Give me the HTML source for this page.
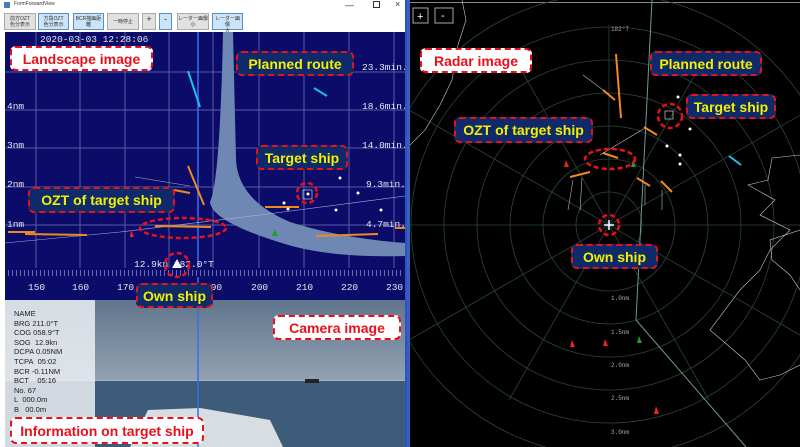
<!DOCTYPE html>
<html><head><meta charset="utf-8"><style>
*{margin:0;padding:0}
body{width:800px;height:447px;overflow:hidden;background:#000;position:relative;font-family:"Liberation Sans","Noto Sans CJK JP",sans-serif}
.lb{position:absolute;border:2.5px dashed #e8101a;border-radius:6px;font-weight:bold;font-size:14px;display:flex;align-items:center;justify-content:center;box-sizing:border-box;white-space:nowrap}
.y{background:#0e2a6a;color:#f4f000}
.w{background:#fff;color:#e8101a}
.btn{position:absolute;top:13px;height:17px;border:1px solid #aaa;background:#e1e1e1;font-size:5px;line-height:6px;text-align:center;color:#333;box-sizing:border-box;padding-top:2px}
.btn.b{background:#cce4f7;border-color:#5a8fcf}
.info{position:absolute;left:5px;top:300px;width:90px;height:147px;background:rgba(235,238,242,.85);font-size:7.5px;line-height:9.6px;color:#222;padding:9px 0 0 9px;box-sizing:border-box}
</style></head><body>
<div style="position:absolute;left:0;top:0;width:407px;height:447px;background:#fff"></div>
<div style="position:absolute;left:4px;top:2px;width:6px;height:6px;background:#4a7cc4"></div>
<div style="position:absolute;left:14px;top:1px;font-size:5px;color:#333">FormForwardView</div>
<div style="position:absolute;left:345px;top:0;font-size:9px;color:#333">—</div>
<div style="position:absolute;left:373px;top:1px;width:5px;height:5px;border:1px solid #333"></div>
<div style="position:absolute;left:395px;top:-1px;font-size:9px;color:#333">×</div>
<div class="btn" style="left:4px;width:32px">前方OZT<br>色分表示</div>
<div class="btn b" style="left:38px;width:31px">方角OZT<br>色分表示</div>
<div class="btn b" style="left:73px;width:31px">BCR描画距<br>離</div>
<div class="btn" style="left:107px;width:32px;padding-top:5px">一時停止</div>
<div class="btn" style="left:142px;width:14px;font-size:9px;padding-top:2px">+</div>
<div class="btn b" style="left:159px;width:13px;font-size:9px;padding-top:2px">-</div>
<div class="btn" style="left:177px;width:32px">レーダー画像<br>小</div>
<div class="btn b" style="left:212px;width:31px">レーダー画像<br>大</div>

<svg style="position:absolute;left:0;top:0" width="800" height="447">
<defs>
<linearGradient id="sky" x1="0" y1="0" x2="0" y2="1"><stop offset="0" stop-color="#5a6f86"/><stop offset=".55" stop-color="#a8b4c2"/><stop offset=".6" stop-color="#8c9bb0"/><stop offset="1" stop-color="#3f5a78"/></linearGradient>
<clipPath id="rc"><rect x="410" y="0" width="390" height="447"/></clipPath>
<clipPath id="cc"><rect x="5" y="32" width="400" height="268"/></clipPath>
</defs>
<rect x="5" y="32" width="400" height="268" fill="#0b0b6a"/>
<g stroke="#5b5ba3" stroke-width="1">
<line x1="36" y1="32" x2="36" y2="268"/><line x1="80" y1="32" x2="80" y2="268"/><line x1="125" y1="32" x2="125" y2="268"/><line x1="169" y1="32" x2="169" y2="268"/><line x1="213" y1="32" x2="213" y2="268"/><line x1="259" y1="32" x2="259" y2="268"/><line x1="304" y1="32" x2="304" y2="268"/><line x1="349" y1="32" x2="349" y2="268"/><line x1="394" y1="32" x2="394" y2="268"/>
<line x1="5" y1="72" x2="405" y2="72"/><line x1="5" y1="110" x2="405" y2="110"/><line x1="5" y1="148" x2="405" y2="148"/><line x1="5" y1="187" x2="405" y2="187"/><line x1="5" y1="225" x2="405" y2="225"/>
</g>
<g clip-path="url(#cc)">
<path d="M223 32 L233 32 L236 160 Q238 200 290 222 Q340 238 405 243 L405 256 Q330 258 285 244 Q212 222 210 202 Q220 180 223 32Z" fill="#6f88b3"/>
</g>
<line x1="198" y1="32" x2="198" y2="447" stroke="#3a6ef0" stroke-width="1.5"/>
<g stroke="#b0b0d0" stroke-width=".6" fill="none">
<path d="M5 243 L120 232 L260 215 L405 196"/><path d="M135 177 L190 186"/>
</g>
<g stroke="#f08a1e" stroke-width="2">
<line x1="8" y1="232" x2="35" y2="232"/><line x1="25" y1="234" x2="87" y2="235"/><line x1="155" y1="226" x2="211" y2="227"/><line x1="265" y1="207" x2="299" y2="207"/><line x1="316" y1="236" x2="378" y2="234"/><line x1="395" y1="228" x2="405" y2="228"/><line x1="188" y1="166" x2="204" y2="205"/><line x1="174" y1="190" x2="190" y2="193"/>
</g>
<g stroke="#19c0f0" stroke-width="2"><line x1="188" y1="71" x2="200" y2="107"/><line x1="314" y1="88" x2="327" y2="96"/></g>
<g fill="#fff"><circle cx="340" cy="178" r="1.5"/><circle cx="284" cy="203" r="1.5"/><circle cx="358" cy="193" r="1.5"/><circle cx="336" cy="210" r="1.5"/><circle cx="381" cy="210" r="1.5"/><circle cx="288" cy="209" r="1.5"/><circle cx="308" cy="194" r="1.5"/></g>
<rect x="303" y="190" width="9" height="9" fill="none" stroke="#ccc" stroke-width=".7"/>
<path d="M275 229 L278 236 L272 236Z" fill="#1aa03a"/>
<path d="M131 230 L134 237 L130 237Z" fill="#e22"/>
<path d="M171 270 L177 259 L183 270Z" fill="#fff"/>
<rect x="5" y="268" width="400" height="9" fill="#0b0b6a"/>
<line x1="8" y1="273" x2="402" y2="273" stroke="#6a6ab0" stroke-width="6" stroke-dasharray="1 3"/>
<g fill="#e8e8f0" font-family="Liberation Mono,monospace" font-size="9.5">
<text x="40" y="42">2020-03-03 12:28:06</text>
<text x="7" y="109">4nm</text><text x="7" y="148">3nm</text><text x="7" y="187">2nm</text><text x="7" y="227">1nm</text>
<text x="362" y="70">23.3min.</text><text x="362" y="109">18.6min.</text><text x="362" y="148">14.0min.</text><text x="366" y="187">9.3min.</text><text x="366" y="227">4.7min.</text>
<text x="134" y="267">12.9kn   182.0°T</text>
<text x="28" y="290">150</text><text x="72" y="290">160</text><text x="117" y="290">170</text><text x="161" y="290">180</text><text x="205" y="290">190</text><text x="251" y="290">200</text><text x="296" y="290">210</text><text x="341" y="290">220</text><text x="386" y="290">230</text>
</g>
<rect x="5" y="300" width="400" height="147" fill="url(#sky)"/>
<rect x="5" y="300" width="400" height="80" fill="#6d8099" opacity=".35"/>
<rect x="5" y="381" width="400" height="66" fill="#3f5b7a"/>
<path d="M130 447 L148 410 L200 408 L270 420 L283 447Z" fill="#d8dde2"/>
<rect x="305" y="379" width="14" height="4" fill="#222"/>
<line x1="198" y1="300" x2="198" y2="447" stroke="#3a6ef0" stroke-width="1.5"/>
<rect x="405" y="0" width="2" height="447" fill="#2b56b8"/>
<rect x="407" y="0" width="393" height="447" fill="#000"/>
<rect x="407" y="0" width="3" height="447" fill="#3560c0"/>
<g clip-path="url(#rc)">
<rect x="407" y="2" width="393" height="1" fill="#888"/>
<g fill="none" stroke="#2a4540" stroke-width=".8">
<circle cx="609" cy="225" r="33"/><circle cx="609" cy="225" r="66"/><circle cx="609" cy="225" r="99"/><circle cx="609" cy="225" r="132"/><circle cx="609" cy="225" r="165"/><circle cx="609" cy="225" r="198"/><circle cx="609" cy="225" r="231"/>
<path d="M609 225 L609 25 M609 225 L409 110 M609 225 L809 110 M609 225 L509 400 M609 225 L709 400 M609 225 L409 340 M609 225 L800 335 M609 225 L510 50 M609 225 L709 50 M407 225 L800 225"/>
</g>
<line x1="652" y1="0" x2="636" y2="320" stroke="#6a9a90" stroke-width="1"/>
<line x1="636" y1="320" x2="746" y2="447" stroke="#6a9a90" stroke-width="1"/>
<g fill="none" stroke="#ccc" stroke-width=".6">
<path d="M462 0 L466 20 L458 45 L452 80 L440 105 L425 130 L410 145"/>
<path d="M800 155 L772 158 L768 180 L748 185 L775 200 L760 215 L790 230 L770 250 L760 270 L740 290 L710 330 L745 360 L760 380 L780 375 L800 365"/>
<path d="M800 230 L770 240 L772 260 L790 275 L800 290"/>
</g>
<g stroke="#f08a1e" stroke-width="2"><line x1="616" y1="54" x2="621" y2="118"/><line x1="603" y1="90" x2="615" y2="100"/><line x1="644" y1="127" x2="657" y2="135"/><line x1="603" y1="153" x2="618" y2="158"/><line x1="570" y1="177" x2="590" y2="172"/><line x1="637" y1="178" x2="650" y2="186"/><line x1="661" y1="181" x2="672" y2="192"/></g>
<g stroke="#bbb" stroke-width=".6"><line x1="583" y1="75" x2="603" y2="90"/><line x1="573" y1="180" x2="568" y2="210"/><line x1="582" y1="178" x2="580" y2="210"/><line x1="645" y1="185" x2="645" y2="205"/><line x1="662" y1="190" x2="662" y2="210"/><line x1="645" y1="128" x2="600" y2="155"/></g>
<line x1="729" y1="156" x2="741" y2="165" stroke="#19c0f0" stroke-width="2"/>
<rect x="665" y="111" width="8" height="8" fill="none" stroke="#ccc" stroke-width=".7"/>
<g fill="#fff"><circle cx="678" cy="97" r="1.5"/><circle cx="690" cy="129" r="1.5"/><circle cx="667" cy="146" r="1.5"/><circle cx="680" cy="155" r="1.5"/><circle cx="680" cy="164" r="1.5"/></g>
<path d="M566 160 L569 167 L564 167Z" fill="#e22"/><path d="M633 160 L636 167 L631 167Z" fill="#1aa03a"/>
<path d="M572 340 L575 347 L570 347Z" fill="#e22"/><path d="M605 339 L608 346 L603 346Z" fill="#e22"/><path d="M639 336 L642 343 L637 343Z" fill="#1aa03a"/><path d="M656 406 L659 414 L654 414Z" fill="#e22"/>
<path d="M604 225 H614 M609 220 V230" stroke="#fff" stroke-width="1.5"/>
<g fill="#aaa" font-family="Liberation Mono,monospace" font-size="6"><text x="611" y="31">182°T</text><text x="611" y="300">1.0nm</text><text x="611" y="334">1.5nm</text><text x="611" y="367">2.0nm</text><text x="611" y="400">2.5nm</text><text x="611" y="434">3.0nm</text></g>
</g>
<rect x="413" y="8" width="15" height="15" fill="none" stroke="#aaa"/><rect x="435" y="8" width="18" height="15" fill="none" stroke="#aaa"/>
<text x="417" y="20" fill="#fff" font-size="11">+</text><text x="441" y="19" fill="#fff" font-size="11">-</text>
<g fill="none" stroke="#e8101a" stroke-width="2.5" stroke-dasharray="5 3">
<circle cx="307" cy="193" r="10"/><ellipse cx="183" cy="228" rx="43" ry="10"/><circle cx="177" cy="265" r="12"/>
<circle cx="670" cy="116" r="12"/><ellipse cx="610" cy="159" rx="25" ry="10"/><circle cx="609" cy="225" r="10"/>
</g>
</svg>
<div class="info">NAME<br>BRG 211.0°T<br>COG 058.9°T<br>SOG&nbsp; 12.9kn<br>DCPA 0.05NM<br>TCPA&nbsp; 05:02<br>BCR -0.11NM<br>BCT&nbsp;&nbsp;&nbsp; 05:16<br>No. 67<br>L&nbsp; 000.0m<br>B&nbsp;&nbsp; 00.0m</div>
<div class="lb w" style="left:10px;top:46px;width:143px;height:25px">Landscape image</div>
<div class="lb y" style="left:236px;top:51px;width:118px;height:25px">Planned route</div>
<div class="lb y" style="left:256px;top:145px;width:92px;height:25px">Target ship</div>
<div class="lb y" style="left:28px;top:187px;width:147px;height:26px">OZT of target ship</div>
<div class="lb y" style="left:136px;top:283px;width:77px;height:25px">Own ship</div>
<div class="lb w" style="left:273px;top:315px;width:128px;height:25px">Camera image</div>
<div class="lb w" style="left:10px;top:417px;width:194px;height:27px">Information on target ship</div>
<div class="lb w" style="left:420px;top:48px;width:112px;height:25px">Radar image</div>
<div class="lb y" style="left:650px;top:51px;width:112px;height:25px">Planned route</div>
<div class="lb y" style="left:686px;top:94px;width:90px;height:25px">Target ship</div>
<div class="lb y" style="left:454px;top:117px;width:139px;height:26px">OZT of target ship</div>
<div class="lb y" style="left:571px;top:244px;width:87px;height:25px">Own ship</div>
</body></html>
